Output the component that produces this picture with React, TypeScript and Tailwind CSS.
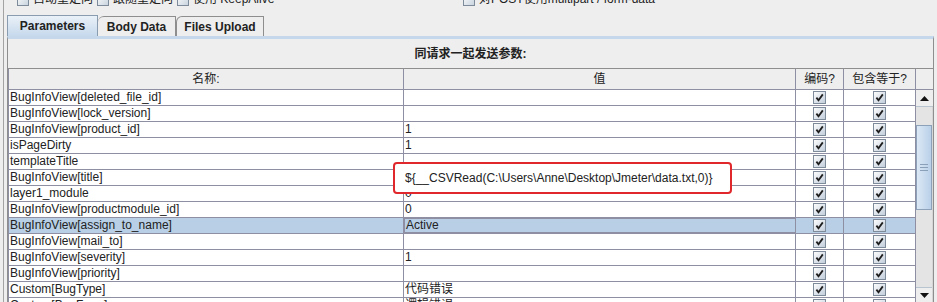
import React from "react";

type Row = { name: string; value: string; selected?: boolean };

const rows: Row[] = [
  { name: "BugInfoView[deleted_file_id]", value: "" },
  { name: "BugInfoView[lock_version]", value: "" },
  { name: "BugInfoView[product_id]", value: "1" },
  { name: "isPageDirty", value: "1" },
  { name: "templateTitle", value: "" },
  { name: "BugInfoView[title]", value: "" },
  { name: "layer1_module", value: "0" },
  { name: "BugInfoView[productmodule_id]", value: "0" },
  { name: "BugInfoView[assign_to_name]", value: "Active", selected: true },
  { name: "BugInfoView[mail_to]", value: "" },
  { name: "BugInfoView[severity]", value: "1" },
  { name: "BugInfoView[priority]", value: "" },
  { name: "Custom[BugType]", value: "代码错误" },
  { name: "Custom[BugFrom]", value: "逻辑错误" },
];

function Check() {
  return (
    <span className="inline-flex h-[13px] w-[13px] items-center justify-center border border-[#7d8b9a] bg-linear-to-br from-[#fdfdfd] to-[#c2cedb]">
      <svg width="9" height="9" viewBox="0 0 9 9">
        <path d="M1.4 4.6 L3.5 7.2 L7.8 1.4" fill="none" stroke="#1f1f1f" strokeWidth="1.8" />
      </svg>
    </span>
  );
}

function TopBox() {
  return <span className="inline-block h-[13px] w-[12px] shrink-0 border border-[#7d8b9a] bg-linear-to-br from-[#fdfdfd] to-[#c9d4df]" />;
}

export default function App() {
  return (
    <div className="relative h-[302px] w-[937px] overflow-hidden bg-[#eeeeee] font-['Liberation_Sans','Noto_Sans_CJK_SC',sans-serif] text-[12px] text-[#222222]">
      <div className="flex h-full">
        <div className="w-[3px] shrink-0" />
        <div className="flex flex-1 flex-col border-l border-[#a3a3a3]">
          {/* checkbox strip, cut off at the top */}
          <div className="h-[15px] shrink-0 overflow-hidden">
            <div className="-mt-[8px] flex h-[14px] items-center pl-[13px] leading-[14px] whitespace-nowrap">
              <TopBox />
              <span className="ml-[4px] w-[64px]">自动重定向</span>
              <TopBox />
              <span className="ml-[4px] w-[64px]">跟随重定向</span>
              <TopBox />
              <span className="ml-[4px] w-[270px]">使用 KeepAlive</span>
              <TopBox />
              <span className="ml-[4px]">对POST使用multipart / form-data</span>
            </div>
          </div>

          {/* tabs */}
          <div className="flex h-[21px] shrink-0 items-end pl-[3px] font-bold">
            <div className="flex h-[21px] w-[91px] items-center justify-center border border-b-0 border-[#8a9cb0] bg-linear-to-b from-[#eaf1f8] to-[#c6d9ec]">
              Parameters
            </div>
            <div className="flex h-[20px] w-[78px] items-center justify-center rounded-tl-[6px] border border-b-0 border-l-0 border-[#8e8e8e] bg-[#eeeeee]">
              Body Data
            </div>
            <div className="flex h-[20px] w-[88px] items-center justify-center rounded-tl-[6px] border border-b-0 border-[#8e8e8e] bg-[#eeeeee]">
              Files Upload
            </div>
          </div>

          {/* panel */}
          <div className="ml-[3px] flex w-[927px] flex-1 flex-col border-x border-[#8e8e8e] border-t-[3px] border-t-[#c4d7eb]">
            <div className="flex h-[29px] shrink-0 items-center justify-center font-bold">同请求一起发送参数:</div>
            <div className="flex shrink-0 border-t border-[#8e8e8e]">
              <div className="flex flex-col border-l border-[#8f8fa3]">
                <div className="flex h-[21px] shrink-0 border-b border-[#8f8fa3]">
                  <div className="flex w-[395px] items-center justify-center border-r border-[#8f8fa3]">名称:</div>
                  <div className="flex w-[392px] items-center justify-center border-r border-[#8f8fa3]">值</div>
                  <div className="flex w-[48px] items-center justify-center border-r border-[#8f8fa3]">编码?</div>
                  <div className="flex w-[72px] items-center justify-center border-r border-[#8f8fa3]">包含等于?</div>
                </div>
                {rows.map((r) => (
                  <div
                    key={r.name}
                    className={`flex h-[16px] shrink-0 border-b border-[#8f8fa3] leading-[15px] ${r.selected ? "bg-[#b8cfe5]" : "bg-white"}`}
                  >
                    <div className="w-[395px] border-r border-[#8f8fa3] pl-[1px] whitespace-nowrap">{r.name}</div>
                    <div
                      className={`w-[392px] border-r border-[#8f8fa3] pl-[1px] whitespace-nowrap ${r.selected ? "border-y border-l border-[#6f7f96] leading-[13px]" : ""}`}
                    >
                      {r.value}
                    </div>
                    <div className="flex w-[48px] items-center justify-center border-r border-[#8f8fa3]">
                      <Check />
                    </div>
                    <div className="flex w-[72px] items-center justify-center border-r border-[#8f8fa3]">
                      <Check />
                    </div>
                  </div>
                ))}
              </div>

              {/* scrollbar */}
              <div className="flex w-[17px] flex-col">
                <div className="h-[21px] shrink-0 border-b border-[#8f8fa3]" />
                <div className="flex h-[17px] shrink-0 items-center justify-center border-b border-[#b8c4d0] bg-[#eeeeee]">
                  <svg width="9" height="5" viewBox="0 0 9 5">
                    <path d="M0 5 L4.5 0 L9 5 Z" fill="#111" />
                  </svg>
                </div>
                <div className="flex h-[196px] shrink-0 flex-col border-r border-[#d6d6d6] bg-[#e4e4e4]">
                  <div className="h-[18px] shrink-0" />
                  <div className="flex h-[85px] shrink-0 flex-col items-center justify-center gap-[2px] border border-[#8da2b8] bg-linear-to-r from-[#dce8f5] to-[#b9d0e8]">
                    <span className="h-px w-[8px] bg-[#8aa0b8]" />
                    <span className="h-px w-[8px] bg-[#8aa0b8]" />
                    <span className="h-px w-[8px] bg-[#8aa0b8]" />
                  </div>
                  <div className="flex-1" />
                  <div className="flex h-[16px] shrink-0 items-center justify-center border-t border-[#b8c4d0] bg-[#eeeeee]">
                    <svg width="9" height="5" viewBox="0 0 9 5">
                      <path d="M0 0 L9 0 L4.5 5 Z" fill="#111" />
                    </svg>
                  </div>
                </div>
              </div>
            </div>
          </div>
        </div>
      </div>

      {/* red annotation box over the title value */}
      <div className="absolute top-[162px] left-[393px] h-[32px] w-[339px] rounded-[4px] border-2 border-[#e0282c] bg-white pt-[7px] pl-[10px] leading-[15px] whitespace-nowrap">
        {"${__CSVRead(C:\\Users\\Anne\\Desktop\\Jmeter\\data.txt,0)}"}
      </div>
    </div>
  );
}
